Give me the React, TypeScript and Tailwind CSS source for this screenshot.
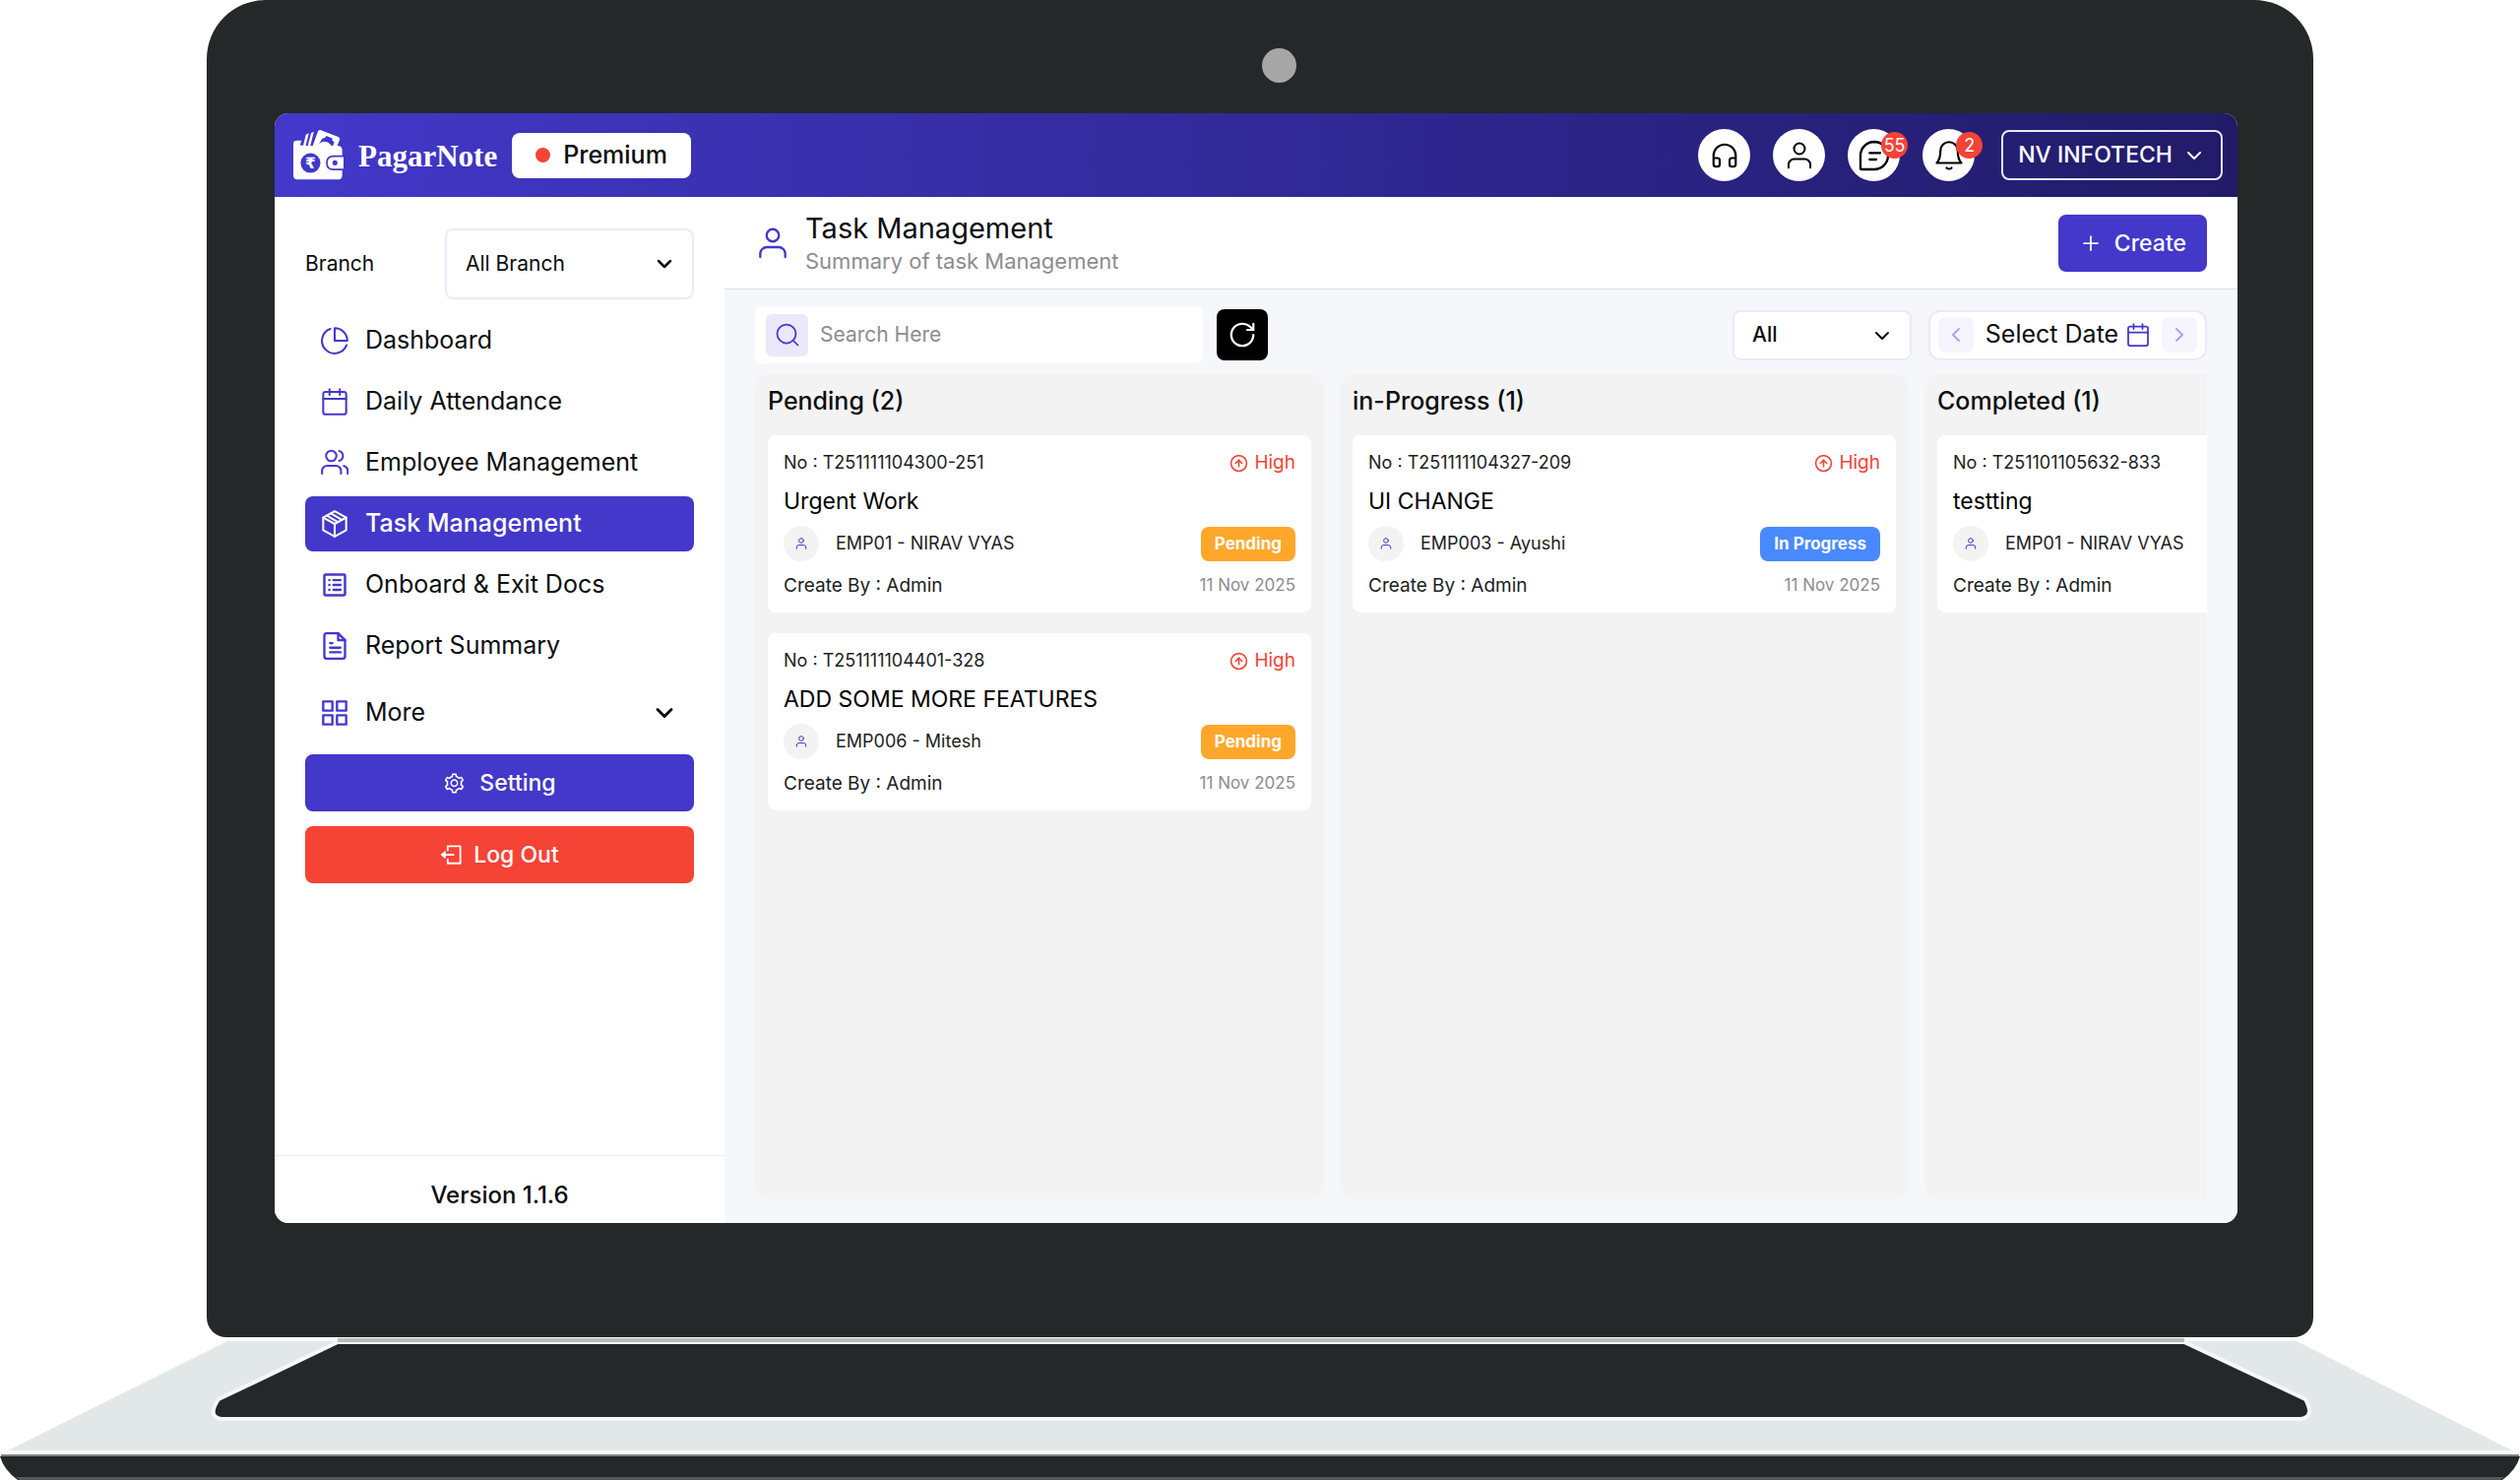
import type { ReactNode } from "react";
import {
  ChevronDown,
  ChevronLeft,
  ChevronRight,
  CircleArrowUp,
  Headphones,
  Plus,
  RotateCw,
} from "lucide-react";
import { AiOutlineSetting } from "react-icons/ai";
import clsx from "clsx";

interface IconProps {
  className?: string;
  strokeWidth?: number;
  children?: ReactNode;
}

function Icon({ className, strokeWidth = 1.75, children }: IconProps) {
  return (
    <svg
      viewBox="0 0 24 24"
      fill="none"
      stroke="currentColor"
      strokeWidth={strokeWidth}
      strokeLinecap="round"
      strokeLinejoin="round"
      aria-hidden="true"
      className={clsx("shrink-0", className)}
    >
      {children}
    </svg>
  );
}

const PieIcon = (p: IconProps) => (
  <Icon {...p}>
    <path d="M12 1v11h11A11 11 0 0 0 12 1z" />
    <path d="M8.2 1.7A11 11 0 1 0 22.3 15.8" />
  </Icon>
);

const CalendarIcon = (p: IconProps) => (
  <Icon {...p}>
    <rect x="2" y="3.5" width="20" height="19.5" rx="2" />
    <path d="M2 9.5h20M7.5 1v5M16.5 1v5" />
  </Icon>
);

const UsersIcon = (p: IconProps) => (
  <Icon {...p}>
    <circle cx="9" cy="6" r="4.5" />
    <path d="M1 21.500V19a4.500 4.500 0 0 1 4.500-4.500h7.500a4.500 4.500 0 0 1 4.500 4.500v2.500" />
    <path d="M16 1.700a4.500 4.500 0 0 1 0 8.600M20 14.700a4.500 4.500 0 0 1 3.300 4.300v2.500" />
  </Icon>
);

const UserIcon = (p: IconProps) => (
  <Icon {...p}>
    <circle cx="12" cy="6" r="4.7" />
    <path d="M2.500 22.500V20a5 5 0 0 1 5-5h9a5 5 0 0 1 5 5v2.500" />
  </Icon>
);

const PackageIcon = (p: IconProps) => (
  <Icon {...p}>
    <path d="M12 1l10 5.500v11L12 23 2 17.500v-11z" />
    <path d="M2 6.500l10 5.500 10-5.500M12 12v11M8.700 2.900l9.500 5.500M5.200 4.800l9.500 5.500" />
  </Icon>
);

const DocsIcon = (p: IconProps) => (
  <Icon {...p} strokeWidth={2.1}>
    <rect x="3" y="3" width="18" height="18" rx="1" />
    <path d="M11 7.800h6M11 12h6M11 16.200h6M7.300 7.800h.1M7.300 12h.1M7.300 16.200h.1" />
  </Icon>
);

const ReportIcon = (p: IconProps) => (
  <Icon {...p} strokeWidth={2}>
    <path d="M15 1H5a2 2 0 0 0-2 2v18a2 2 0 0 0 2 2h14a2 2 0 0 0 2-2V7z" />
    <path d="M15 1v6h6M8 9.500h2M8 13.500h9M8 17.500h9" />
  </Icon>
);

const GridIcon = (p: IconProps) => (
  <Icon {...p} strokeWidth={2}>
    <path d="M2 2h8v8H2zM14 2h8v8h-8zM2 14h8v8H2zM14 14h8v8h-8z" />
  </Icon>
);

const ChatIcon = (p: IconProps) => (
  <Icon {...p}>
    <path d="M12 1.500a10.500 10.500 0 0 1 0 21H2.500a1 1 0 0 1-1-1V12A10.500 10.500 0 0 1 12 1.500z" />
    <path d="M8.500 10h8M8.500 15h5" />
  </Icon>
);

const BellIcon = (p: IconProps) => (
  <Icon {...p}>
    <path d="M12 1a7 7 0 0 0-7 7c0 5-1.200 8-3 10h20c-1.800-2-3-5-3-10a7 7 0 0 0-7-7z" />
    <path d="M10 22c1 1 3 1 4 0" />
  </Icon>
);

const SearchIcon = (p: IconProps) => (
  <Icon {...p}>
    <circle cx="11" cy="11" r="9.500" />
    <path d="M17.500 17.500l5 5" />
  </Icon>
);

const LogoutIcon = (p: IconProps) => (
  <Icon {...p}>
    <path d="M8.500 7V2.500h14v19h-14V17" />
    <path d="M15 12H4" />
    <path d="M5.500 8.500L1 12l4.500 3.500z" fill="currentColor" strokeWidth="1" />
  </Icon>
);

function WalletLogo() {
  return (
    <svg viewBox="0 0 152 152" className="size-[51px] shrink-0" aria-hidden="true">
      <g fill="#fff">
        <path d="M0 42q0-10 10-10h15l-5 14h8v6H0z" />
        <path d="M29 50l9-36 9-4-10 40zM43 50l11-41 8-4-11 45z" />
        <path d="M58 50L74 5q3-7 10-4l52 20q6 3 4 9l-8 20z" />
        <path d="M0 48h134q14 0 14 14v74q0 14-14 14H12q-12 0-12-12z" />
      </g>
      <path
        d="M78 42l10-17q8 2 12-7l18 7q-2 8 6 11l-4 12h-4q-18-22-38-6z"
        fill="#4338ca"
      />
      <path d="M78 48q17-20 34 0z" fill="#fff" />
      <circle cx="52" cy="100" r="30" fill="#4338ca" />
      <path d="M152 77h-31q-22 0-22 22.500t22 22.500h31z" fill="#4338ca" />
      <path d="M152 82h-30q-18 0-18 17.500t18 17.500h30z" fill="#fff" />
      <circle cx="126" cy="99.500" r="7.500" fill="#4338ca" />
      <text
        x="52"
        y="117"
        textAnchor="middle"
        fontSize="46"
        fontWeight="700"
        fill="#fff"
        className="font-['DejaVu_Sans']"
      >
        ₹
      </text>
    </svg>
  );
}

const navItems = [
  { icon: PieIcon, label: "Dashboard", href: "#dashboard" },
  { icon: CalendarIcon, label: "Daily Attendance", href: "#attendance" },
  { icon: UsersIcon, label: "Employee Management", href: "#employees" },
  { icon: PackageIcon, label: "Task Management", href: "#tasks", active: true },
  { icon: DocsIcon, label: "Onboard & Exit Docs", href: "#docs" },
  { icon: ReportIcon, label: "Report Summary", href: "#reports" },
];

interface Task {
  no: string;
  title: string;
  employee: string;
  priority?: string;
  status?: "Pending" | "In Progress";
  date?: string;
}

const columns: { title: string; tasks: Task[] }[] = [
  {
    title: "Pending (2)",
    tasks: [
      {
        no: "T251111104300-251",
        title: "Urgent Work",
        employee: "EMP01 - NIRAV VYAS",
        priority: "High",
        status: "Pending",
        date: "11 Nov 2025",
      },
      {
        no: "T251111104401-328",
        title: "ADD SOME MORE FEATURES",
        employee: "EMP006 - Mitesh",
        priority: "High",
        status: "Pending",
        date: "11 Nov 2025",
      },
    ],
  },
  {
    title: "in-Progress (1)",
    tasks: [
      {
        no: "T251111104327-209",
        title: "UI CHANGE",
        employee: "EMP003 - Ayushi",
        priority: "High",
        status: "In Progress",
        date: "11 Nov 2025",
      },
    ],
  },
  {
    title: "Completed (1)",
    tasks: [{ no: "T251101105632-833", title: "testting", employee: "EMP01 - NIRAV VYAS" }],
  },
];

const statusColors = {
  Pending: "bg-[#ffa72b]",
  "In Progress": "bg-[#4889ff]",
};

function RoundButton({ label, badge, children }: { label: string; badge?: string; children: ReactNode }) {
  return (
    <button
      type="button"
      aria-label={label}
      className="relative flex size-[53px] items-center justify-center rounded-full bg-white text-black"
    >
      {children}
      {badge && (
        <span className="absolute -right-2 top-[3px] flex size-[27px] items-center justify-center rounded-full bg-[#f54336] text-lg text-white">
          {badge}
        </span>
      )}
    </button>
  );
}

function TopBar() {
  return (
    <header className="flex h-[85px] shrink-0 items-center bg-linear-to-r from-[#4338ca] to-[#211b68] pl-[19px] pr-[15px]">
      <WalletLogo />
      <span className="ml-[15px] pt-1 font-['Liberation_Serif',serif] text-[31px] font-bold text-white">
        PagarNote
      </span>
      <span className="ml-[15px] flex h-[46px] items-center gap-[13px] rounded-lg bg-white px-6 text-[25px] font-medium">
        <span className="size-[15px] rounded-full bg-[#f54336]" />
        Premium
      </span>
      <div className="ml-auto flex items-center gap-[23px]">
        <RoundButton label="Support">
          <Headphones className="size-[30px]" strokeWidth={1.75} />
        </RoundButton>
        <RoundButton label="Profile">
          <UserIcon className="size-7" />
        </RoundButton>
        <RoundButton label="Messages" badge="55">
          <ChatIcon className="size-8" />
        </RoundButton>
        <RoundButton label="Notifications" badge="2">
          <BellIcon className="size-[30px]" />
        </RoundButton>
      </div>
      <button
        type="button"
        className="ml-[27px] flex h-[51px] items-center gap-2.5 rounded-lg border-2 border-white/90 px-[15px] text-[23px] font-medium text-white"
      >
        NV INFOTECH
        <ChevronDown className="size-6" strokeWidth={2} />
      </button>
    </header>
  );
}

function Sidebar() {
  return (
    <aside className="flex w-[457px] shrink-0 flex-col bg-white">
      <div className="flex items-center justify-between px-[31px] pt-8">
        <label htmlFor="branch" className="text-[21px]">
          Branch
        </label>
        <div className="relative w-[253px]">
          <select
            id="branch"
            className="h-[72px] w-full appearance-none rounded-lg border-2 border-[#ebe9fb] bg-white pl-[19px] text-[21px]"
          >
            <option>All Branch</option>
          </select>
          <ChevronDown
            className="pointer-events-none absolute right-[18px] top-6 size-6"
            strokeWidth={2.5}
          />
        </div>
      </div>

      {/* Navigation */}
      <nav className="flex flex-col gap-1.5 px-[31px] pt-[14px]">
        {navItems.map((item) => (
          <a
            key={item.label}
            href={item.href}
            className={clsx(
              "flex h-14 items-center gap-[17px] rounded-lg pl-4 text-[25px]",
              item.active && "bg-[#4338ca] font-medium text-white"
            )}
          >
            <item.icon className={clsx("size-7", !item.active && "text-[#4338ca]")} />
            {item.label}
          </a>
        ))}
        <button
          type="button"
          className="mt-1.5 flex h-14 items-center gap-[17px] pl-4 pr-4 text-[25px]"
        >
          <GridIcon className="size-7 text-[#4338ca]" />
          More
          <ChevronDown className="ml-auto size-7" strokeWidth={2.5} />
        </button>
      </nav>

      <div className="flex flex-col gap-[15px] px-[31px] pt-[14px] text-[23px] font-medium text-white">
        <button
          type="button"
          className="flex h-[58px] items-center justify-center gap-[14px] rounded-lg bg-[#4338ca]"
        >
          <AiOutlineSetting className="size-[23px]" />
          Setting
        </button>
        <button
          type="button"
          className="flex h-[58px] items-center justify-center gap-3 rounded-lg bg-[#f54336]"
        >
          <LogoutIcon className="size-[22px]" strokeWidth={2} />
          Log Out
        </button>
      </div>

      <p className="mt-auto border-t border-[#ececf0] pb-2.5 pt-[22px] text-center text-[24px] font-medium">
        Version 1.1.6
      </p>
    </aside>
  );
}

function TaskCard({ task }: { task: Task }) {
  return (
    <article className="rounded-lg bg-white px-4 pb-0.5 pt-[14px] text-[#1b1e22]">
      <div className="flex h-7 items-center justify-between text-lg">
        <span>No : {task.no}</span>
        {task.priority && (
          <span className="flex items-center gap-1.5 text-[19px] text-[#f54336]">
            <CircleArrowUp className="size-[19px]" strokeWidth={2} />
            {task.priority}
          </span>
        )}
      </div>
      <h3 className="text-[23px] leading-[50px] text-black">{task.title}</h3>
      <div className="flex h-9 items-center text-lg">
        <span className="flex size-9 items-center justify-center rounded-full bg-[#f3f3f4] text-[#4338ca]">
          <UserIcon className="size-3" strokeWidth={2} />
        </span>
        <span className="ml-[17px]">{task.employee}</span>
        {task.status && (
          <span
            className={clsx(
              "ml-auto flex h-[35px] items-center rounded-lg px-[14px] text-[17px] font-bold text-white",
              statusColors[task.status]
            )}
          >
            {task.status}
          </span>
        )}
      </div>
      <div className="flex h-[50px] items-center justify-between text-[19px]">
        <span>Create By : Admin</span>
        {task.date && <time className="text-[17px] text-[#8b8d90]">{task.date}</time>}
      </div>
    </article>
  );
}

function Toolbar() {
  return (
    <div className="flex items-center">
      <div className="flex h-[58px] w-[455px] items-center gap-3 rounded-lg bg-white pl-[11px]">
        <label
          htmlFor="search"
          aria-label="Search"
          className="flex size-[43px] items-center justify-center rounded-md bg-[#eae8fa] text-[#4338ca]"
        >
          <SearchIcon className="size-6" />
        </label>
        <input
          id="search"
          type="search"
          placeholder="Search Here"
          className="min-w-0 flex-1 text-[21px] outline-none placeholder:text-[#8b8d90]"
        />
      </div>
      <button
        type="button"
        aria-label="Refresh"
        className="ml-[14px] flex size-[52px] items-center justify-center rounded-lg bg-black text-white"
      >
        <RotateCw className="size-[30px]" strokeWidth={1.75} />
      </button>

      <div className="relative ml-auto w-[182px]">
        <select
          aria-label="Status"
          className="h-[51px] w-full appearance-none rounded-lg border-2 border-[#ebe9fb] bg-white pl-[18px] text-[21px] font-medium"
        >
          <option>All</option>
        </select>
        <ChevronDown
          className="pointer-events-none absolute right-[18px] top-[14px] size-6"
          strokeWidth={2}
        />
      </div>
      <div className="ml-[17px] flex h-[51px] w-[283px] items-center justify-between rounded-xl border-2 border-[#ebe9fb] bg-white px-2 text-[25px]">
        <button
          type="button"
          aria-label="Previous date"
          className="flex size-9 items-center justify-center rounded-lg bg-[#f6f5fd] text-[#aaa5e8]"
        >
          <ChevronLeft className="size-6" strokeWidth={2} />
        </button>
        <button type="button" className="flex items-center gap-2">
          Select Date
          <CalendarIcon className="size-6 text-[#4338ca]" />
        </button>
        <button
          type="button"
          aria-label="Next date"
          className="flex size-9 items-center justify-center rounded-lg bg-[#f6f5fd] text-[#aaa5e8]"
        >
          <ChevronRight className="size-6" strokeWidth={2} />
        </button>
      </div>
    </div>
  );
}

function TaskBoard() {
  return (
    <main className="flex min-w-0 flex-1 flex-col bg-[#f5f7fb]">
      <div className="flex items-center border-b border-[#dcdedf] bg-white px-[31px] pb-[15px] pt-4">
        <UserIcon className="ml-0.5 size-8 text-[#4338ca]" />
        <div className="ml-[17px]">
          <h1 className="text-[29px] leading-8">Task Management</h1>
          <p className="mt-1 text-[22px] leading-[26px] text-[#8b8d90]">Summary of task Management</p>
        </div>
        <button
          type="button"
          className="ml-auto flex h-[58px] items-center gap-3 rounded-lg bg-[#4338ca] px-[21px] text-[23px] font-medium text-white"
        >
          <Plus className="size-6" strokeWidth={1.75} />
          Create
        </button>
      </div>

      <div className="flex flex-1 flex-col gap-[11px] px-[31px] pb-6 pt-[17px]">
        <Toolbar />
        <div className="flex flex-1 gap-4 overflow-hidden">
          {columns.map((column) => (
            <section key={column.title} className="w-[578px] shrink-0 rounded-2xl bg-[#f3f3f3] px-[13px]">
              <h2 className="mb-2 text-[25px] font-medium leading-[54px]">{column.title}</h2>
              <div className="flex flex-col gap-[21px]">
                {column.tasks.map((task) => (
                  <TaskCard key={task.no} task={task} />
                ))}
              </div>
            </section>
          ))}
        </div>
      </div>
    </main>
  );
}

function LaptopBase() {
  return (
    <svg
      viewBox="0 0 2560 145"
      preserveAspectRatio="none"
      className="block h-[145px] w-full shrink-0"
      aria-hidden="true"
    >
      <path d="M233 3L4 117h2552L2331 3z" fill="#e2e8e8" />
      <path d="M233 1h2098v3H233z" fill="#f8f9f9" />
      <path
        d="M343 5L222 63q-12 18 3 20h2112q15-2 5-20L2219 5z"
        fill="#242829"
        stroke="#f6f8f8"
        strokeWidth="4"
      />
      <path d="M343 1h1876v4H343z" fill="#b9bcbc" />
      <path d="M4 115h2552v4H4z" fill="#fafbfb" />
      <path d="M0 121h2560q-4 14-18 24H18Q4 135 0 121z" fill="#242829" />
      <path d="M1 119h2558v2H1z" fill="#7f8282" />
      <path d="M16 142h2528l-4 3H20z" fill="#555859" />
    </svg>
  );
}

export default function App() {
  return (
    <div className="flex min-h-screen flex-col bg-white font-[Inter,sans-serif] text-[#0b0d0f]">
      <div className="mx-[210px] flex flex-1 flex-col rounded-b-[20px] rounded-t-[60px] bg-[#242829] pb-[116px] pl-[69px] pr-[77px]">
        <div className="flex h-[115px] shrink-0 justify-center pl-[46px] pt-[49px]">
          <span className="size-[35px] rounded-full bg-[#a6a6a6]" />
        </div>
        <div className="flex flex-1 flex-col overflow-hidden rounded-[14px] bg-white">
          <TopBar />
          <div className="flex flex-1">
            <Sidebar />
            <TaskBoard />
          </div>
        </div>
      </div>
      <LaptopBase />
    </div>
  );
}
